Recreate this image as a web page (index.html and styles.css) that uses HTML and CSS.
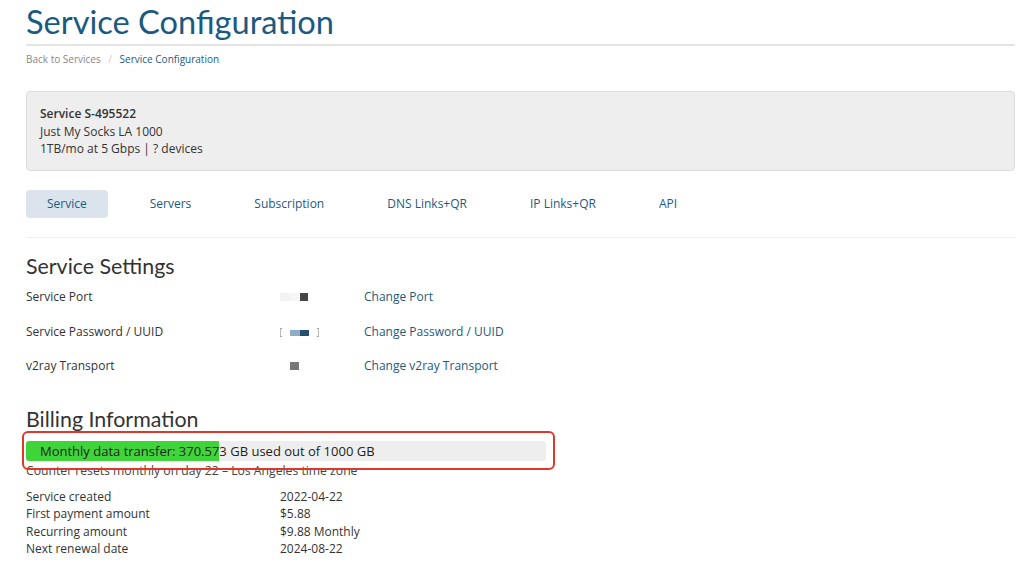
FILE: index.html
```html
<!DOCTYPE html>
<html lang="en">
<head>
	<meta charset="UTF-8">
	<title>Service Configuration</title>
	<link rel="stylesheet" href="styles.css">
</head>
<body>
	<div class="page">
		<h1 class="page-title">Service Configuration</h1>
		<div class="breadcrumb">
			<a class="crumb-back" href="#">Back to Services</a>
			<span class="crumb-sep">/</span>
			<span class="crumb-current">Service Configuration</span>
		</div>

		<div class="service-box">
			<div class="service-id">Service S-495522</div>
			<div>Just My Socks LA 1000</div>
			<div>1TB/mo at 5 Gbps | ? devices</div>
		</div>

		<ul class="tabs">
			<li class="tab tab-active">Service</li>
			<li class="tab">Servers</li>
			<li class="tab">Subscription</li>
			<li class="tab">DNS Links+QR</li>
			<li class="tab">IP Links+QR</li>
			<li class="tab">API</li>
		</ul>

		<h2 class="section-title">Service Settings</h2>
		<div class="settings">
			<div class="setting-row">
				<span class="setting-label">Service Port</span>
				<span class="setting-value">
					<span class="blur blur-port">
						<i class="px px-a"></i><i class="px px-b"></i><i class="px px-dark"></i>
					</span>
				</span>
				<a class="setting-link" href="#">Change Port</a>
			</div>
			<div class="setting-row">
				<span class="setting-label">Service Password / UUID</span>
				<span class="setting-value">
					<span class="blur blur-uuid">
						<i class="px px-light"></i><i class="px px-navy"></i>
					</span>
				</span>
				<a class="setting-link" href="#">Change Password / UUID</a>
			</div>
			<div class="setting-row">
				<span class="setting-label">v2ray Transport</span>
				<span class="setting-value">
					<span class="blur blur-v2">
						<i class="px px-gray"></i>
					</span>
				</span>
				<a class="setting-link" href="#">Change v2ray Transport</a>
			</div>
		</div>

		<h2 class="section-title billing-title">Billing Information</h2>
		<div class="usage">
			<div class="usage-bar">
				<div class="usage-fill" style="width: 37.06%"></div>
				<span class="usage-text">Monthly data transfer: 370.573 GB used out of 1000 GB</span>
			</div>
			<div class="usage-note">Counter resets monthly on day 22 &ndash; Los Angeles time zone</div>
			<div class="highlight"></div>
		</div>

		<div class="billing">
			<span>Service created</span><span>2022-04-22</span>
			<span>First payment amount</span><span>$5.88</span>
			<span>Recurring amount</span><span>$9.88 Monthly</span>
			<span>Next renewal date</span><span>2024-08-22</span>
		</div>
	</div>
</body>
</html>
```

FILE: styles.css
```css
body{
	margin: 0;
	background: #fff;
	font-family: "Open Sans", "Liberation Sans", sans-serif;
	font-size: 12px;
	color: #333;
}
a{
	color: #1d5a80;
	text-decoration: none;
}
.page{
	width: 989px;
	margin-left: 26px;
}
.page-title{
	margin: 0;
	padding-top: 2px;
	height: 42px;
	font-family: "Lato", "Noto Sans", sans-serif;
	font-weight: 400;
	font-size: 32.6px;
	line-height: 40px;
	color: #1b5a80;
	border-bottom: 2px solid #e4e4e4;
}
.breadcrumb{
	margin-top: 6px;
	font-size: 10px;
	line-height: 14px;
}
.crumb-back{
	color: #888;
}
.crumb-sep{
	color: #ccc;
	margin: 0 5px;
}
.crumb-current{
	color: #1d5a80;
}

.service-box{
	margin-top: 25px;
	padding: 13px 13px;
	height: 52px;
	background: #eeeeee;
	border: 1px solid #dcdcdc;
	border-radius: 4px;
	line-height: 17.5px;
}
.service-id{
	font-weight: 600;
	color: #333;
}

.tabs{
	list-style: none;
	margin: 19px 0 0;
	padding: 0 0 19px;
	display: flex;
	gap: 21px;
	border-bottom: 1px solid #eee;
}
.tab{
	padding: 0 21px;
	height: 28px;
	line-height: 28px;
	border-radius: 4px;
	color: #1d5a80;
}
.tab-active{
	background: #dbe4ec;
}

.section-title{
	margin: 16px 0 0;
	font-family: "Lato", "Noto Sans", sans-serif;
	font-weight: 400;
	font-size: 21.4px;
	line-height: 24px;
	color: #333;
}
.settings{
	margin-top: 10px;
}
.setting-row{
	display: flex;
	height: 34.5px;
	line-height: 17px;
}
.setting-label{
	width: 254px;
}
.setting-value{
	width: 84px;
}
.blur{
	display: inline-flex;
	align-items: center;
	height: 17px;
}
.px{
	display: inline-block;
}
.px-a{
	width: 10px;
	height: 8px;
	background: #f3f3f3;
}
.px-b{
	width: 9px;
	height: 8px;
	background: #f6f6f6;
}
.px-dark{
	width: 8px;
	height: 8px;
	margin-left: 1px;
	background: #444;
}
.blur-uuid{
	padding: 0 1px 0 10px;
	position: relative;
}
.blur-uuid::before,
.blur-uuid::after{
	content: "";
	position: absolute;
	top: 4px;
	width: 2px;
	height: 9px;
	border-top: 1px dashed #999;
	border-bottom: 1px dashed #999;
	box-sizing: border-box;
}
.blur-uuid::before{
	left: 0;
	border-left: 1px solid #bbb;
}
.blur-uuid::after{
	right: -9px;
	border-right: 1px solid #bbb;
}
.px-light{
	width: 10px;
	height: 6px;
	background: #8daec6;
}
.px-navy{
	width: 9px;
	height: 6px;
	background: #264e6e;
}
.blur-v2{
	padding-left: 10px;
}
.px-gray{
	width: 9px;
	height: 8px;
	background: #777;
}

.billing-title{
	margin-top: 15px;
}
.usage{
	position: relative;
	margin-top: 10px;
}
.usage-bar{
	position: relative;
	width: 520px;
	height: 20px;
	background: #eeeeee;
	border-radius: 3px;
	overflow: hidden;
}
.usage-fill{
	height: 100%;
	background: #3fd53a;
}
.usage-text{
	position: absolute;
	left: 14px;
	top: 0;
	line-height: 20px;
	font-size: 13px;
	color: #222;
}
.usage-note{
	line-height: 17px;
	margin-top: 1px;
	color: #444;
	font-size: 12.2px;
}
.highlight{
	position: absolute;
	left: -4px;
	top: -10px;
	width: 529px;
	height: 35px;
	border: 2px solid #e0372c;
	border-radius: 6px;
}

.billing{
	display: grid;
	grid-template-columns: 254px auto;
	margin-top: 9px;
	line-height: 17.6px;
}
```
